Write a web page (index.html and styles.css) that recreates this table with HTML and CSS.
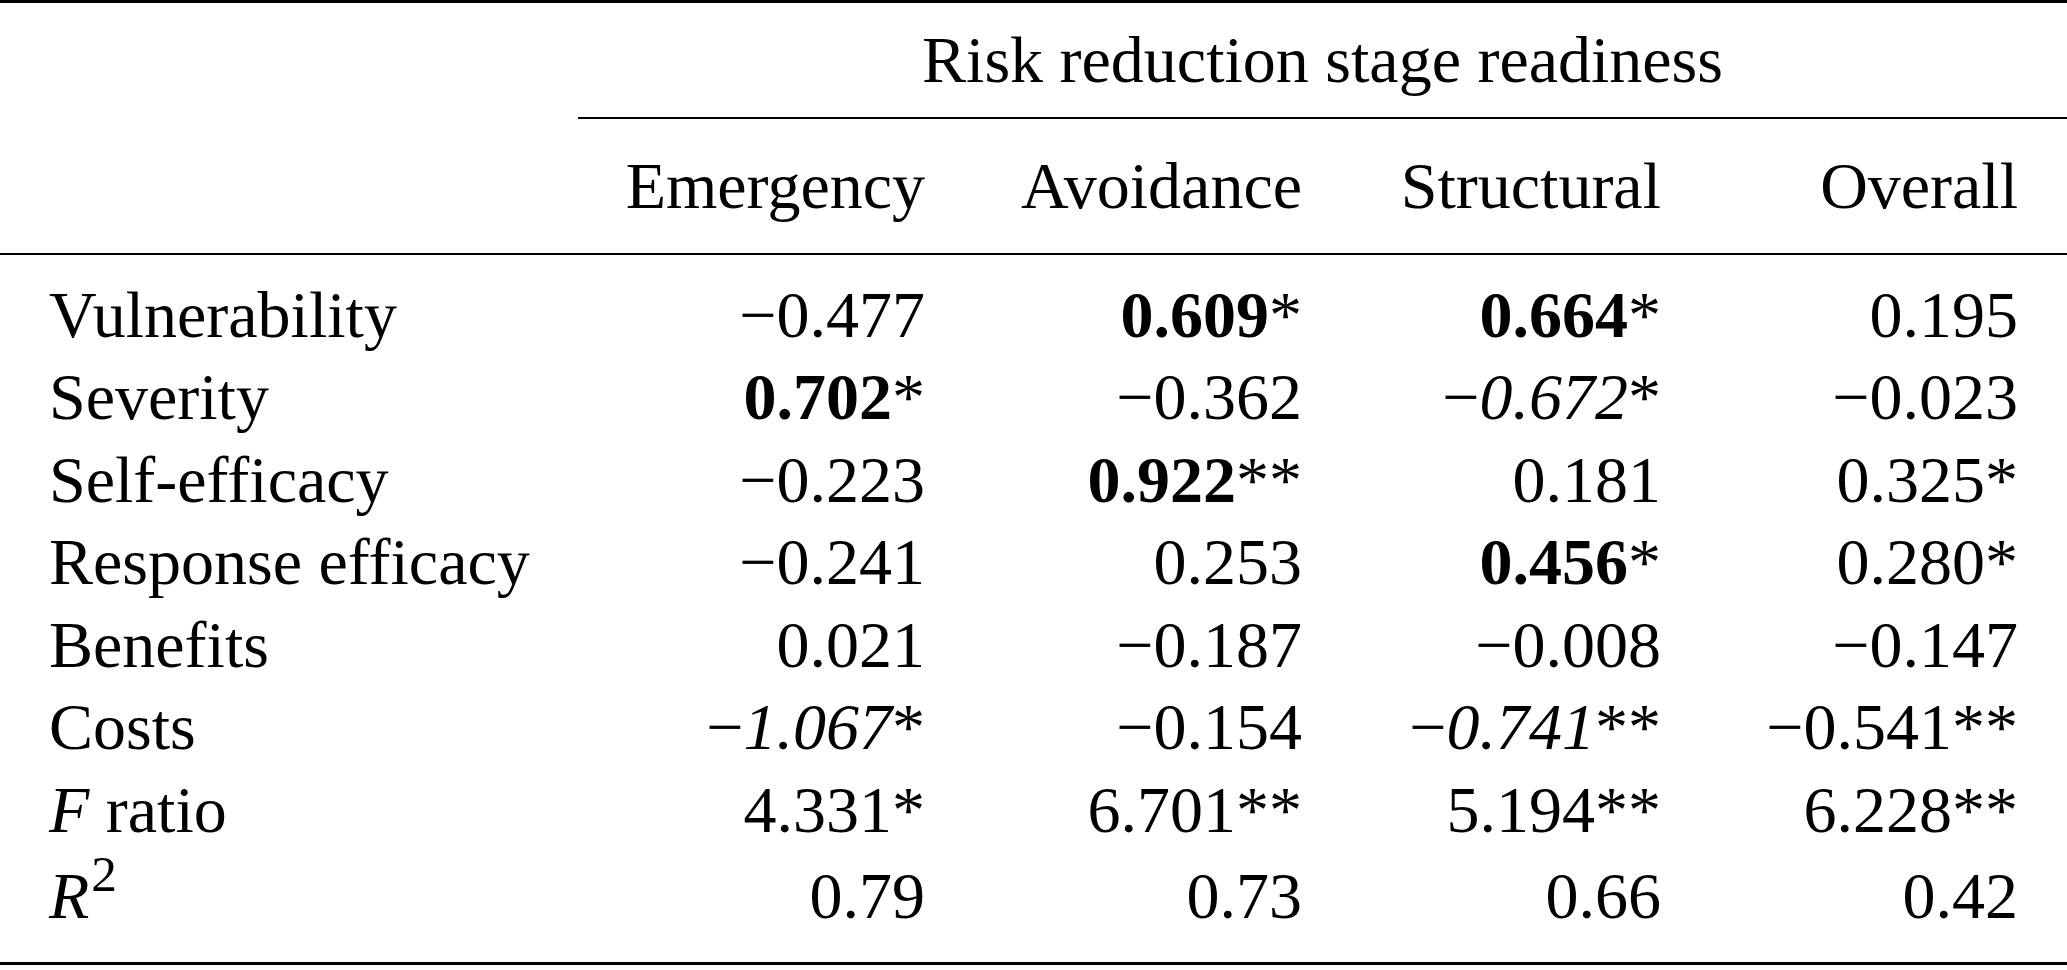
FILE: index.html
```html
<!DOCTYPE html>
<html lang="en">
<head>
<meta charset="utf-8">
<title>Risk reduction stage readiness</title>
<link rel="stylesheet" href="styles.css">
</head>
<body>
<table class="tbl">
  <colgroup>
    <col class="c-label">
    <col class="c-em">
    <col class="c-av">
    <col class="c-st">
    <col class="c-ov">
  </colgroup>
  <thead>
    <tr class="r-group">
      <th class="blank"></th>
      <th class="group" colspan="4">Risk reduction stage readiness</th>
    </tr>
    <tr class="r-head">
      <th class="blank"></th>
      <th class="num">Emergency</th>
      <th class="num">Avoidance</th>
      <th class="num">Structural</th>
      <th class="num">Overall</th>
    </tr>
  </thead>
  <tbody>
    <tr class="first">
      <td class="label">Vulnerability</td>
      <td class="num">−0.477</td>
      <td class="num"><b>0.609</b>*</td>
      <td class="num"><b>0.664</b>*</td>
      <td class="num">0.195</td>
    </tr>
    <tr>
      <td class="label">Severity</td>
      <td class="num"><b>0.702</b>*</td>
      <td class="num">−0.362</td>
      <td class="num">−<i>0.672</i>*</td>
      <td class="num">−0.023</td>
    </tr>
    <tr>
      <td class="label">Self-efficacy</td>
      <td class="num">−0.223</td>
      <td class="num"><b>0.922</b>**</td>
      <td class="num">0.181</td>
      <td class="num">0.325*</td>
    </tr>
    <tr>
      <td class="label">Response efficacy</td>
      <td class="num">−0.241</td>
      <td class="num">0.253</td>
      <td class="num"><b>0.456</b>*</td>
      <td class="num">0.280*</td>
    </tr>
    <tr>
      <td class="label">Benefits</td>
      <td class="num">0.021</td>
      <td class="num">−0.187</td>
      <td class="num">−0.008</td>
      <td class="num">−0.147</td>
    </tr>
    <tr>
      <td class="label">Costs</td>
      <td class="num">−<i>1.067</i>*</td>
      <td class="num">−0.154</td>
      <td class="num">−<i>0.741</i>**</td>
      <td class="num">−0.541**</td>
    </tr>
    <tr>
      <td class="label"><i>F</i> ratio</td>
      <td class="num">4.331*</td>
      <td class="num">6.701**</td>
      <td class="num">5.194**</td>
      <td class="num">6.228**</td>
    </tr>
    <tr class="last">
      <td class="label"><i>R</i><sup>2</sup></td>
      <td class="num">0.79</td>
      <td class="num">0.73</td>
      <td class="num">0.66</td>
      <td class="num">0.42</td>
    </tr>
  </tbody>
</table>
</body>
</html>
```
FILE: styles.css
```css
html, body {
  margin: 0;
  padding: 0;
  background: #ffffff;
}

body {
  font-family: "Liberation Serif", "Times New Roman", serif;
  font-size: 66px;
  color: #000000;
}

.tbl {
  width: 2067px;
  table-layout: fixed;
  border-collapse: separate;
  border-spacing: 0;
  border-top: 3px solid #000;
  border-bottom: 3px solid #000;
}

.c-label { width: 578px; }
.c-em { width: 396px; }
.c-av { width: 377px; }
.c-st { width: 359px; }
.c-ov { width: 357px; }

th, td {
  padding: 0;
  font-weight: normal;
  line-height: 82.5px;
  white-space: nowrap;
  vertical-align: top;
}

.r-group th {
  line-height: 83px;
  padding-top: 15px;
  padding-bottom: 16px;
}

.group {
  text-align: center;
  border-bottom: 2px solid #000;
}

.r-head th {
  line-height: 83px;
  padding-top: 25px;
  padding-bottom: 26px;
  border-bottom: 2px solid #000;
}

.num {
  text-align: right;
  padding-right: 49px;
}

.label {
  text-align: left;
  padding-left: 49px;
}

.first td {
  padding-top: 18.5px;
}

.last td {
  padding-top: 3.5px;
  padding-bottom: 25px;
}

b {
  font-weight: bold;
}

i {
  font-style: italic;
}

sup {
  font-size: 0.78em;
  line-height: 0;
  vertical-align: 27px;
  margin-left: 2px;
}
```
